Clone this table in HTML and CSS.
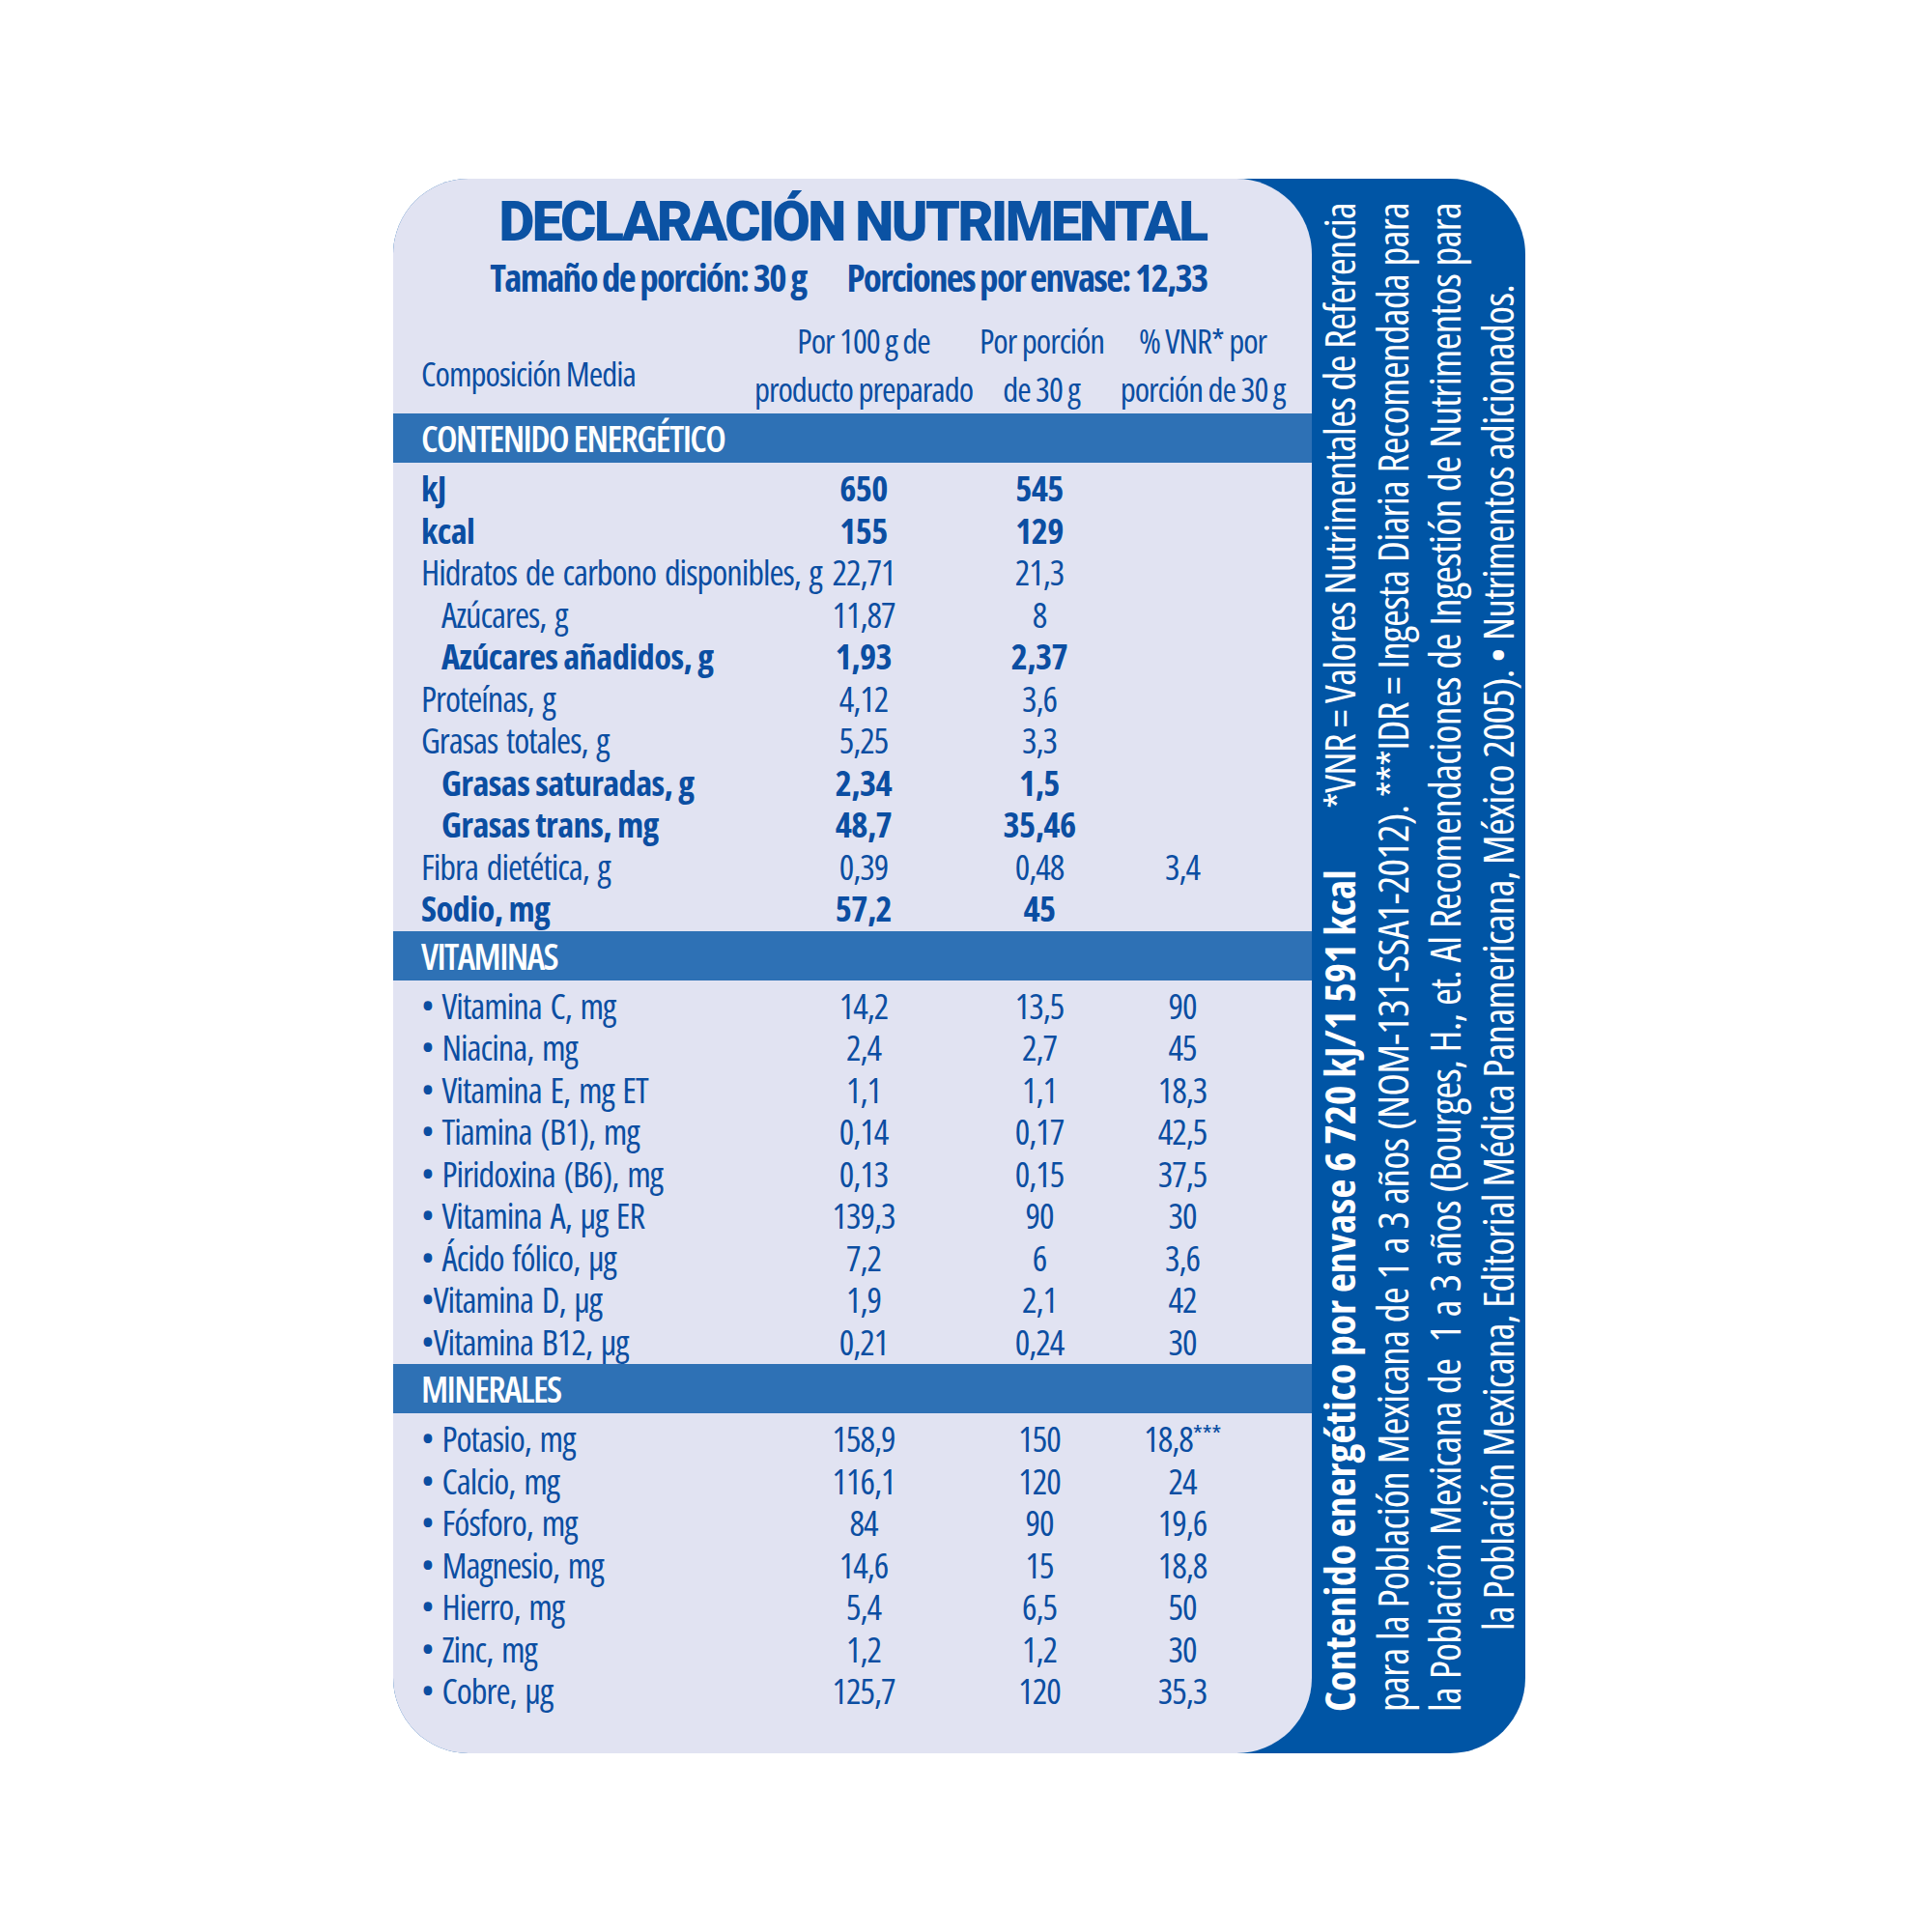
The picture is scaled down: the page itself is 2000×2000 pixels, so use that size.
FILE: index.html
```html
<!DOCTYPE html>
<html lang="es">
<head>
<meta charset="utf-8">
<title>Declaración Nutrimental</title>
<link rel="stylesheet" href="styles.css">
</head>
<body>
<div class="card">
  <div class="panel">
    <h1 class="title">DECLARACIÓN NUTRIMENTAL</h1>
    <div class="subtitle"><span>Tamaño de porción: 30 g</span><span>Porciones por envase: 12,33</span></div>
    <div class="head">
      <span class="lbl">Composición Media</span>
      <span class="c">Por 100 g de<br>producto preparado</span>
      <span class="c">Por porción<br>de 30 g</span>
      <span class="c">% VNR* por<br>porción de 30 g</span>
    </div>

    <div class="band">CONTENIDO ENERGÉTICO</div>
    <div class="rows">
      <div class="row b"><span>kJ</span><span>650</span><span>545</span><span></span></div>
      <div class="row b"><span>kcal</span><span>155</span><span>129</span><span></span></div>
      <div class="row"><span>Hidratos de carbono disponibles, g</span><span>22,71</span><span>21,3</span><span></span></div>
      <div class="row"><span class="in">Azúcares, g</span><span>11,87</span><span>8</span><span></span></div>
      <div class="row b"><span class="in">Azúcares añadidos, g</span><span>1,93</span><span>2,37</span><span></span></div>
      <div class="row"><span>Proteínas, g</span><span>4,12</span><span>3,6</span><span></span></div>
      <div class="row"><span>Grasas totales, g</span><span>5,25</span><span>3,3</span><span></span></div>
      <div class="row b"><span class="in">Grasas saturadas, g</span><span>2,34</span><span>1,5</span><span></span></div>
      <div class="row b"><span class="in">Grasas trans, mg</span><span>48,7</span><span>35,46</span><span></span></div>
      <div class="row"><span>Fibra dietética, g</span><span>0,39</span><span>0,48</span><span>3,4</span></div>
      <div class="row b"><span>Sodio, mg</span><span>57,2</span><span>45</span><span></span></div>
    </div>

    <div class="band">VITAMINAS</div>
    <div class="rows">
      <div class="row"><span>• Vitamina C, mg</span><span>14,2</span><span>13,5</span><span>90</span></div>
      <div class="row"><span>• Niacina, mg</span><span>2,4</span><span>2,7</span><span>45</span></div>
      <div class="row"><span>• Vitamina E, mg ET</span><span>1,1</span><span>1,1</span><span>18,3</span></div>
      <div class="row"><span>• Tiamina (B1), mg</span><span>0,14</span><span>0,17</span><span>42,5</span></div>
      <div class="row"><span>• Piridoxina (B6), mg</span><span>0,13</span><span>0,15</span><span>37,5</span></div>
      <div class="row"><span>• Vitamina A, µg ER</span><span>139,3</span><span>90</span><span>30</span></div>
      <div class="row"><span>• Ácido fólico, µg</span><span>7,2</span><span>6</span><span>3,6</span></div>
      <div class="row"><span>•Vitamina D, µg</span><span>1,9</span><span>2,1</span><span>42</span></div>
      <div class="row"><span>•Vitamina B12, µg</span><span>0,21</span><span>0,24</span><span>30</span></div>
    </div>

    <div class="band">MINERALES</div>
    <div class="rows">
      <div class="row"><span>• Potasio, mg</span><span>158,9</span><span>150</span><span>18,8<sup class="ast">***</sup></span></div>
      <div class="row"><span>• Calcio, mg</span><span>116,1</span><span>120</span><span>24</span></div>
      <div class="row"><span>• Fósforo, mg</span><span>84</span><span>90</span><span>19,6</span></div>
      <div class="row"><span>• Magnesio, mg</span><span>14,6</span><span>15</span><span>18,8</span></div>
      <div class="row"><span>• Hierro, mg</span><span>5,4</span><span>6,5</span><span>50</span></div>
      <div class="row"><span>• Zinc, mg</span><span>1,2</span><span>1,2</span><span>30</span></div>
      <div class="row"><span>• Cobre, µg</span><span>125,7</span><span>120</span><span>35,3</span></div>
    </div>
  </div>

  <div class="notes">
    <div class="nl first"><b>Contenido energético por envase 6 720 kJ/1 591 kcal</b><span>*VNR = Valores Nutrimentales de Referencia</span></div>
    <div class="nl">para la Población Mexicana de 1 a 3 años (NOM-131-SSA1-2012). ***IDR = Ingesta Diaria Recomendada para</div>
    <div class="nl">la Población Mexicana de&nbsp; 1 a 3 años (Bourges, H., et. Al Recomendaciones de Ingestión de Nutrimentos para</div>
    <div class="nl last">la Población Mexicana, Editorial Médica Panamericana, México 2005). • Nutrimentos adicionados.</div>
  </div>
</div>
</body>
</html>
```
FILE: styles.css
```css
html, body {
  margin: 0;
  padding: 0;
  background: #ffffff;
}

body {
  font-family: "Open Sans", "DejaVu Sans", sans-serif;
  font-stretch: 75%;
  color: #0b4ea2;
}

.card {
  display: flex;
  width: 1172px;
  height: 1630px;
  margin: 185px 0 0 407px;
  background: #0055a5;
  border-radius: 78px;
}

.panel {
  flex: 0 0 951px;
  box-sizing: border-box;
  padding-top: 16px;
  background: #e1e3f2;
  border-radius: 78px;
}

.title {
  margin: 0;
  font-family: Roboto, "Open Sans", sans-serif;
  font-stretch: normal;
  font-weight: 900;
  font-size: 57px;
  line-height: 57px;
  letter-spacing: -2.6px;
  text-align: center;
  color: #0b52a3;
}

.subtitle {
  display: flex;
  justify-content: center;
  gap: 42px;
  margin-top: 5px;
  padding-right: 8px;
  font-weight: 700;
  font-size: 39px;
  line-height: 48px;
  letter-spacing: -1.7px;
  white-space: nowrap;
}

.head {
  display: grid;
  grid-template-columns: 338px 240px 128px 206px;
  margin-top: 17px;
  padding-left: 29px;
  font-size: 35px;
  line-height: 50px;
  letter-spacing: -1px;
  white-space: nowrap;
}

.head .lbl {
  padding-top: 34px;
}

.head .c {
  text-align: center;
}

.band {
  height: 51px;
  padding-left: 29px;
  background: #2e71b5;
  color: #ffffff;
  font-weight: 600;
  font-size: 38px;
  line-height: 51px;
  letter-spacing: -1.6px;
}

.rows {
  padding: 5px 0 1px 29px;
}

.row {
  display: grid;
  grid-template-columns: 374px 168px 196px 100px;
  height: 43.5px;
  font-size: 36.5px;
  line-height: 43.5px;
  letter-spacing: -1px;
  word-spacing: 3px;
  white-space: nowrap;
}

.row span + span {
  text-align: center;
}

.row.b {
  font-weight: 700;
  letter-spacing: -0.6px;
  word-spacing: 0;
}

.row .in {
  padding-left: 21px;
}

.ast {
  font-size: 26px;
  line-height: 0;
  vertical-align: 9px;
  letter-spacing: -0.5px;
}

.notes {
  flex: 1 1 auto;
  box-sizing: border-box;
  height: 1630px;
  padding: 43px 2px 25px 0;
  writing-mode: vertical-rl;
  transform: rotate(180deg);
  color: #ffffff;
  font-size: 43.5px;
  line-height: 54.5px;
  letter-spacing: -0.8px;
}

.nl {
  white-space: nowrap;
  text-align: justify;
  text-align-last: justify;
}

.nl.first {
  display: flex;
  justify-content: space-between;
}

.nl.first b {
  font-weight: 700;
  letter-spacing: 0;
}

.nl.last {
  text-align: center;
  text-align-last: center;
}
```
